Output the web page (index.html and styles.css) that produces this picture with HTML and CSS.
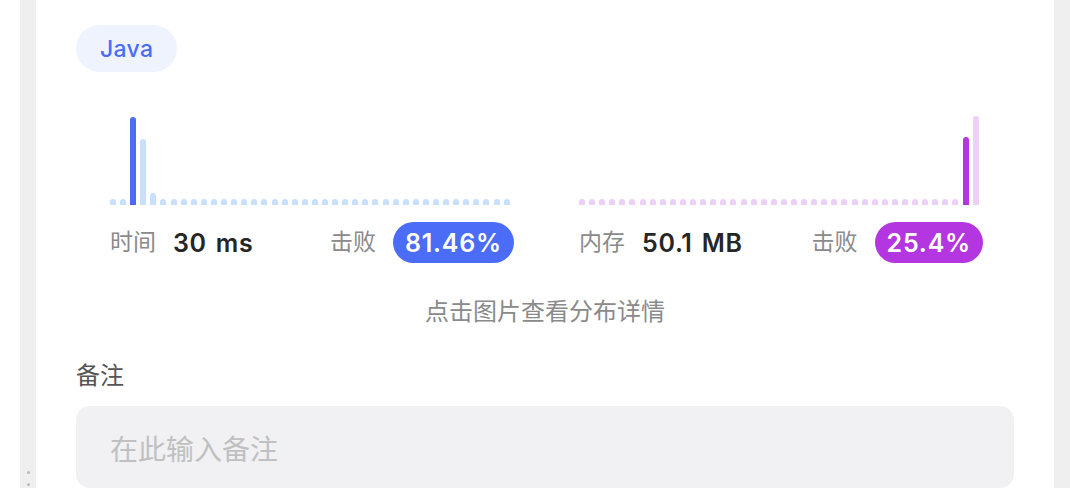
FILE: index.html
```html
<!DOCTYPE html>
<html lang="zh-CN">
<head>
<meta charset="utf-8">
<title>提交详情</title>
<link rel="stylesheet" href="styles.css">
</head>
<body>
<div class="page">
  <div class="gutter"></div>
  <div class="rail rail-left">
    <div class="grip"><span></span><span></span></div>
  </div>
  <main class="card">
    <div class="lang-row"><span class="lang">Java</span></div>

    <div class="stats">
      <div class="col">
        <div class="chart blue">
          <i></i><i></i><i class="on" style="height:88px"></i><i style="height:66px"></i><i style="height:12px"></i>
          <i></i><i></i><i></i><i></i><i></i><i></i><i></i><i></i><i></i><i></i>
          <i></i><i></i><i></i><i></i><i></i><i></i><i></i><i></i><i></i><i></i>
          <i></i><i></i><i></i><i></i><i></i><i></i><i></i><i></i><i></i><i></i>
          <i></i><i></i><i></i><i></i><i></i>
        </div>
        <div class="metric">
          <div class="pair"><span class="label">时间</span><span class="value">30 ms</span></div>
          <div class="pair"><span class="label">击败</span><span class="badge badge-blue">81.46%</span></div>
        </div>
      </div>
      <div class="col">
        <div class="chart purple">
          <i></i><i></i><i></i><i></i><i></i><i></i><i></i><i></i><i></i><i></i>
          <i></i><i></i><i></i><i></i><i></i><i></i><i></i><i></i><i></i><i></i>
          <i></i><i></i><i></i><i></i><i></i><i></i><i></i><i></i><i></i><i></i>
          <i></i><i></i><i></i><i></i><i></i><i></i><i></i><i></i>
          <i class="on" style="height:68px"></i><i style="height:89px"></i>
        </div>
        <div class="metric">
          <div class="pair"><span class="label">内存</span><span class="value">50.1 MB</span></div>
          <div class="pair"><span class="label">击败</span><span class="badge badge-purple">25.4%</span></div>
        </div>
      </div>
    </div>

    <p class="hint">点击图片查看分布详情</p>

    <div class="note-label">备注</div>
    <div class="note-input">在此输入备注</div>
  </main>
  <div class="rail rail-right"></div>
</div>
</body>
</html>
```

FILE: styles.css
```css
* { box-sizing: border-box; }

html, body {
  margin: 0;
  padding: 0;
  background: #ffffff;
  font-family: "Inter", "Noto Sans CJK SC", sans-serif;
  overflow: hidden;
}

.page {
  display: flex;
  height: 488px;
}

.gutter {
  width: 20px;
  flex: none;
}

.rail {
  width: 16px;
  flex: none;
  background: #efefef;
  display: flex;
  flex-direction: column;
  justify-content: flex-end;
  align-items: center;
}

.grip {
  display: flex;
  flex-direction: column;
  gap: 9px;
  margin-bottom: 2px;
}

.grip span {
  width: 3px;
  height: 3px;
  border-radius: 50%;
  background: #b9b9b9;
}

.card {
  flex: 1;
  padding: 25px 40px 0;
  display: flex;
  flex-direction: column;
}

.lang-row {
  display: flex;
}

.lang {
  display: inline-flex;
  align-items: center;
  height: 47px;
  padding: 0 24px;
  border-radius: 24px;
  background: #eef3fe;
  color: #4a6cf6;
  font-size: 23px;
  font-weight: 500;
  letter-spacing: 0.3px;
}

.stats {
  display: flex;
  gap: 65px;
  margin: 43px 0 0 34px;
}

.col {
  width: 404px;
  display: flex;
  flex-direction: column;
}

.chart {
  width: 400px;
  height: 90px;
  display: flex;
  align-items: flex-end;
  justify-content: space-between;
}

.chart i {
  display: block;
  width: 6px;
  height: 6px;
  border-radius: 3px 3px 0 0;
}

.blue i { background: #c8dffd; }
.blue i.on { background: #4a6cf6; }
.purple i { background: #ecd0f7; }
.purple i.on { background: #b336e0; }

.metric {
  margin-top: 17px;
  height: 41px;
  display: flex;
  align-items: center;
  justify-content: space-between;
}

.pair {
  display: flex;
  align-items: center;
}

.label {
  font-size: 23px;
  line-height: 30px;
  color: #8a8a8a;
  margin: 0 17px 1px 0;
}

.value {
  font-size: 25px;
  line-height: 30px;
  font-weight: 600;
  color: #262626;
  letter-spacing: 0.7px;
  word-spacing: 2px;
}

.badge {
  height: 41px;
  display: inline-flex;
  align-items: center;
  padding: 0 12px;
  border-radius: 21px;
  color: #ffffff;
  font-size: 25px;
  font-weight: 600;
  letter-spacing: 0.8px;
}

.badge-blue { background: #4a6cf6; }
.badge-purple { background: #b336e0; }

.hint {
  margin: 35px 0 0;
  text-align: center;
  font-size: 24px;
  line-height: 28px;
  color: #8a8a8a;
}

.note-label {
  margin-top: 36px;
  font-size: 24px;
  line-height: 28px;
  color: #555555;
}

.note-input {
  margin-top: 16px;
  height: 92px;
  border-radius: 14px;
  background: #f1f1f3;
  padding: 27px 34px 0;
  font-size: 28px;
  line-height: 34px;
  color: #c0c0c0;
}
```
